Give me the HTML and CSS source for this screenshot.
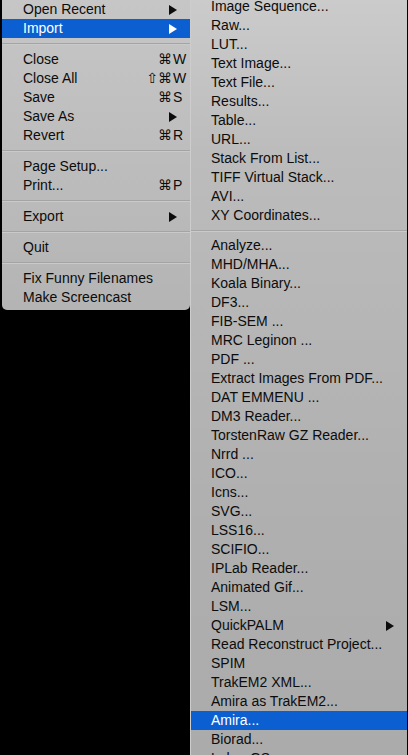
FILE: index.html
```html
<!DOCTYPE html>
<html>
<head>
<meta charset="utf-8">
<link rel="stylesheet" href="styles.css">
</head>
<body>
<div class="screen">
  <div class="menu main">
    <div class="item"><span class="label">Open Recent</span><svg class="arrow" viewBox="0 0 8 10"><polygon points="0,0 8,5 0,10"/></svg></div>
    <div class="item active"><span class="label">Import</span><svg class="arrow" viewBox="0 0 8 10"><polygon points="0,0 8,5 0,10"/></svg></div>
    <div class="sep"></div>
    <div class="item"><span class="label">Close</span><span class="mods">⌘</span><span class="key">W</span></div>
    <div class="item"><span class="label">Close All</span><span class="mods">⇧⌘</span><span class="key">W</span></div>
    <div class="item"><span class="label">Save</span><span class="mods">⌘</span><span class="key">S</span></div>
    <div class="item"><span class="label">Save As</span><svg class="arrow" viewBox="0 0 8 10"><polygon points="0,0 8,5 0,10"/></svg></div>
    <div class="item"><span class="label">Revert</span><span class="mods">⌘</span><span class="key">R</span></div>
    <div class="sep"></div>
    <div class="item"><span class="label">Page Setup...</span></div>
    <div class="item"><span class="label">Print...</span><span class="mods">⌘</span><span class="key">P</span></div>
    <div class="sep"></div>
    <div class="item"><span class="label">Export</span><svg class="arrow" viewBox="0 0 8 10"><polygon points="0,0 8,5 0,10"/></svg></div>
    <div class="sep"></div>
    <div class="item"><span class="label">Quit</span></div>
    <div class="sep"></div>
    <div class="item"><span class="label">Fix Funny Filenames</span></div>
    <div class="item"><span class="label">Make Screencast</span></div>
  </div>
  <div class="menu sub">
    <div class="list">
      <div class="item"><span class="label">Image Sequence...</span></div>
      <div class="item"><span class="label">Raw...</span></div>
      <div class="item"><span class="label">LUT...</span></div>
      <div class="item"><span class="label">Text Image...</span></div>
      <div class="item"><span class="label">Text File...</span></div>
      <div class="item"><span class="label">Results...</span></div>
      <div class="item"><span class="label">Table...</span></div>
      <div class="item"><span class="label">URL...</span></div>
      <div class="item"><span class="label">Stack From List...</span></div>
      <div class="item"><span class="label">TIFF Virtual Stack...</span></div>
      <div class="item"><span class="label">AVI...</span></div>
      <div class="item"><span class="label">XY Coordinates...</span></div>
      <div class="sep sub-sep"></div>
      <div class="item"><span class="label">Analyze...</span></div>
      <div class="item"><span class="label">MHD/MHA...</span></div>
      <div class="item"><span class="label">Koala Binary...</span></div>
      <div class="item"><span class="label">DF3...</span></div>
      <div class="item"><span class="label">FIB-SEM ...</span></div>
      <div class="item"><span class="label">MRC Leginon ...</span></div>
      <div class="item"><span class="label">PDF ...</span></div>
      <div class="item"><span class="label">Extract Images From PDF...</span></div>
      <div class="item"><span class="label">DAT EMMENU ...</span></div>
      <div class="item"><span class="label">DM3 Reader...</span></div>
      <div class="item"><span class="label">TorstenRaw GZ Reader...</span></div>
      <div class="item"><span class="label">Nrrd ...</span></div>
      <div class="item"><span class="label">ICO...</span></div>
      <div class="item"><span class="label">Icns...</span></div>
      <div class="item"><span class="label">SVG...</span></div>
      <div class="item"><span class="label">LSS16...</span></div>
      <div class="item"><span class="label">SCIFIO...</span></div>
      <div class="item"><span class="label">IPLab Reader...</span></div>
      <div class="item"><span class="label">Animated Gif...</span></div>
      <div class="item"><span class="label">LSM...</span></div>
      <div class="item"><span class="label">QuickPALM</span><svg class="arrow" viewBox="0 0 8 10"><polygon points="0,0 8,5 0,10"/></svg></div>
      <div class="item"><span class="label">Read Reconstruct Project...</span></div>
      <div class="item"><span class="label">SPIM</span></div>
      <div class="item"><span class="label">TrakEM2 XML...</span></div>
      <div class="item"><span class="label">Amira as TrakEM2...</span></div>
      <div class="item active"><span class="label">Amira...</span></div>
      <div class="item"><span class="label">Biorad...</span></div>
      <div class="item"><span class="label">Lahm GS...</span></div>
    </div>
  </div>
</div>
</body>
</html>
```

FILE: styles.css
```css
html, body {
  margin: 0;
  padding: 0;
  background: #000;
}
body {
  width: 408px;
  height: 755px;
  overflow: hidden;
  font-family: "Liberation Sans", Arial, sans-serif;
  font-size: 14px;
  color: #0c0c0c;
}
.screen {
  display: flex;
  align-items: flex-start;
  height: 755px;
  padding-left: 2px;
}
.menu {
  display: flex;
  flex-direction: column;
}
.main {
  width: 188px;
  padding-bottom: 3px;
  background: linear-gradient(#c6c6c6, #b4b4b4);
  border-radius: 0 0 5px 5px;
}
.sub {
  width: 216px;
  height: 755px;
  overflow: hidden;
  border-left: 1px solid #cdcdcd;
  background: linear-gradient(#cbcbcb, #bcbcbc 20%, #afafaf 70%, #ababab);
}
.sub .list {
  display: flex;
  flex-direction: column;
  margin-top: -3px;
}
.item {
  display: flex;
  align-items: center;
  height: 19px;
  line-height: 19px;
  padding-left: 21px;
  white-space: nowrap;
}
.sub .item {
  padding-left: 20px;
}
.label {
  flex: 1;
}
.item.active {
  background: #0b5fd1;
  color: #fff;
}
.arrow {
  width: 8px;
  height: 10px;
  margin-right: 13px;
  fill: #0c0c0c;
}
.active .arrow {
  fill: #fff;
}
.mods {
  font-family: "DejaVu Sans", sans-serif;
  font-size: 14px;
  text-align: right;
}
.key {
  width: 18px;
  padding-left: 1px;
  box-sizing: border-box;
}
.sep {
  height: 12px;
  display: flex;
  flex-direction: column;
  justify-content: center;
}
.sep::before {
  content: "";
  display: block;
  height: 1px;
  background: #a4a4a4;
  border-bottom: 1px solid #cacaca;
}
.sub-sep {
  height: 11px;
}
```
